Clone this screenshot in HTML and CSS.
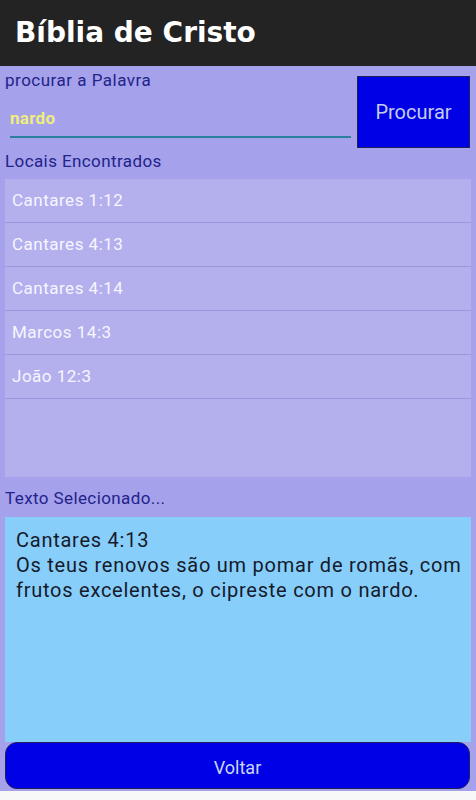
FILE: index.html
```html
<!DOCTYPE html>
<html>
<head>
    <meta name="viewport" content="width=device-width, initial-scale=1.0">
    <link rel="stylesheet" href="styles.css">
</head>
<body>
    <div class="app">
        <header class="topbar">
            <h1>Bíblia de Cristo</h1>
        </header>

        <div class="content">
            <div class="search-row">
                <div class="search-field">
                    <label for="palavra">procurar a Palavra</label>
                    <input type="text" id="palavra" value="nardo">
                </div>
                <button class="btn-search">Procurar</button>
            </div>

            <div class="section-label">Locais Encontrados</div>
            <ul class="results">
                <li>Cantares 1:12</li>
                <li>Cantares 4:13</li>
                <li>Cantares 4:14</li>
                <li>Marcos 14:3</li>
                <li>João 12:3</li>
            </ul>

            <div class="section-label">Texto Selecionado...</div>
            <div class="verse">
                Cantares 4:13<br>
                Os teus renovos são um pomar de romãs, com frutos excelentes, o cipreste com o nardo.
            </div>

            <button class="btn-back">Voltar</button>
        </div>
    </div>
</body>
</html>
```

FILE: styles.css
```css
body {
    margin: 0;
    padding: 0;
    font-family: Roboto, "Liberation Sans", sans-serif;
    background-color: #f8f8f8;
}

.app {
    width: 476px;
    height: 791px;
    display: flex;
    flex-direction: column;
    background-color: #a5a1ea;
}

.topbar {
    height: 66px;
    flex-shrink: 0;
    background-color: #232323;
    display: flex;
    align-items: center;
    padding-left: 15px;
}

.topbar h1 {
    margin: 0 0 2px 0;
    color: #fff;
    font-family: "DejaVu Sans", sans-serif;
    font-weight: bold;
    font-size: 28px;
    letter-spacing: 0;
}

.content {
    flex: 1;
    display: flex;
    flex-direction: column;
    padding: 0 5px 2px 5px;
}

.search-row {
    display: flex;
    align-items: flex-start;
}

.search-field {
    flex: 1;
    display: flex;
    flex-direction: column;
}

.search-field label {
    color: #23238a;
    font-size: 17px;
    letter-spacing: 0.5px;
    line-height: 20px;
    padding-top: 4px;
}

.search-field input {
    margin: 18px 6px 0 5px;
    padding: 0 0 8px 0;
    border: none;
    border-bottom: 2px solid #2a7f9e;
    background: transparent;
    font-family: Roboto, sans-serif;
    font-weight: bold;
    font-size: 17px;
    letter-spacing: 0.3px;
    color: #eeee7e;
    outline: none;
}

.btn-search {
    width: 113px;
    height: 72px;
    margin-top: 10px;
    margin-right: 1px;
    background-color: #0000e6;
    border: 1px solid #20205a;
    color: #c2cdec;
    font-family: Roboto, sans-serif;
    font-size: 20px;
    padding: 0;
}

.section-label {
    color: #23238a;
    font-size: 17px;
    letter-spacing: 0.4px;
    line-height: 20px;
    margin-top: 3px;
}

.results {
    list-style: none;
    margin: 8px 0 0 0;
    padding: 0;
    height: 298px;
    flex-shrink: 0;
    background-color: #b4b0ee;
}

.results li {
    height: 43px;
    border-bottom: 1px solid #9c98de;
    color: #f6f6ff;
    font-size: 17px;
    letter-spacing: 0.5px;
    line-height: 43px;
    padding-left: 7px;
}

.results + .section-label {
    margin-top: 11px;
}

.verse {
    flex: 1;
    margin-top: 9px;
    background-color: #87cefa;
    color: #151a2c;
    font-size: 20px;
    letter-spacing: 0.75px;
    line-height: 25px;
    padding: 11px 6px 0 11px;
}

.btn-back {
    height: 47px;
    flex-shrink: 0;
    background-color: #0000e6;
    border: 1px solid #20205a;
    border-radius: 12px;
    color: #c8d8f4;
    font-family: Roboto, sans-serif;
    font-size: 18px;
    padding-top: 4px;
    margin-right: 1px;
}
```
